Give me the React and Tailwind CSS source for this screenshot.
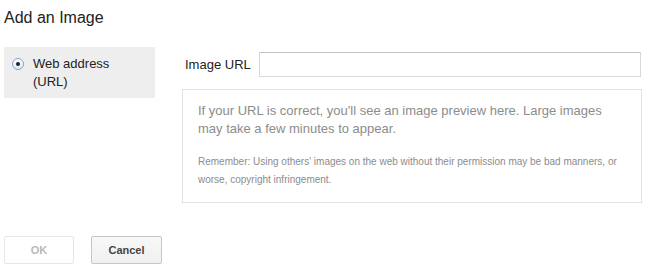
export default function App() {
  return (
    <div className="bg-white w-[655px] h-[273px] px-[4px] pt-[8px] text-[#222] font-['Liberation_Sans',Arial,sans-serif]">
      <h2 className="text-[16px] leading-[20px]">Add an Image</h2>
      <div className="flex mt-[19px]">
        <div className="w-[151px] h-[51px] bg-[#eeeeee] flex items-start pl-[8px] pt-[8px]">
          <span className="mt-[3px] w-[12px] h-[12px] rounded-full border border-[#8aa2c7] bg-gradient-to-b from-[#fdfdfd] to-[#dfe8f5] flex items-center justify-center shrink-0">
            <span className="w-[4px] h-[4px] rounded-full bg-[#222]" />
          </span>
          <div className="ml-[9px] text-[13px] leading-[18px] text-[#222]">
            Web address<br />(URL)
          </div>
        </div>
        <div className="ml-[27px] w-[460px]">
          <div className="flex items-center mt-[5px]">
            <label className="ml-[3px] w-[74px] text-[13px] leading-[18px] text-[#222]">Image URL</label>
            <input type="text" className="w-[382px] h-[25px] border border-[#d9d9d9] border-t-[#c0c0c0] bg-white outline-none" />
          </div>
          <div className="mt-[12px] h-[114px] border border-[#e2e2e2] pl-[15px] pr-[12px] pt-[12px]">
            <p className="text-[13px] leading-[18px] text-[#8c8c8c]">
              If your URL is correct, you'll see an image preview here. Large images may take a few minutes to appear.
            </p>
            <p className="mt-[15px] text-[10px] leading-[18px] text-[#8c8c8c]">
              Remember: Using others' images on the web without their permission may be bad manners, or worse, copyright infringement.
            </p>
          </div>
        </div>
      </div>
      <div className="flex gap-[17px] mt-[33px]">
        <button className="w-[70px] h-[28px] border border-[#e6e6e6] rounded-[2px] bg-white text-[11px] font-bold text-[#b8b8b8]">OK</button>
        <button className="w-[71px] h-[28px] border border-[#c6c6c6] rounded-[2px] bg-gradient-to-b from-[#f8f8f8] to-[#f0f0f0] text-[11px] font-bold text-[#444]">Cancel</button>
      </div>
    </div>
  )
}
